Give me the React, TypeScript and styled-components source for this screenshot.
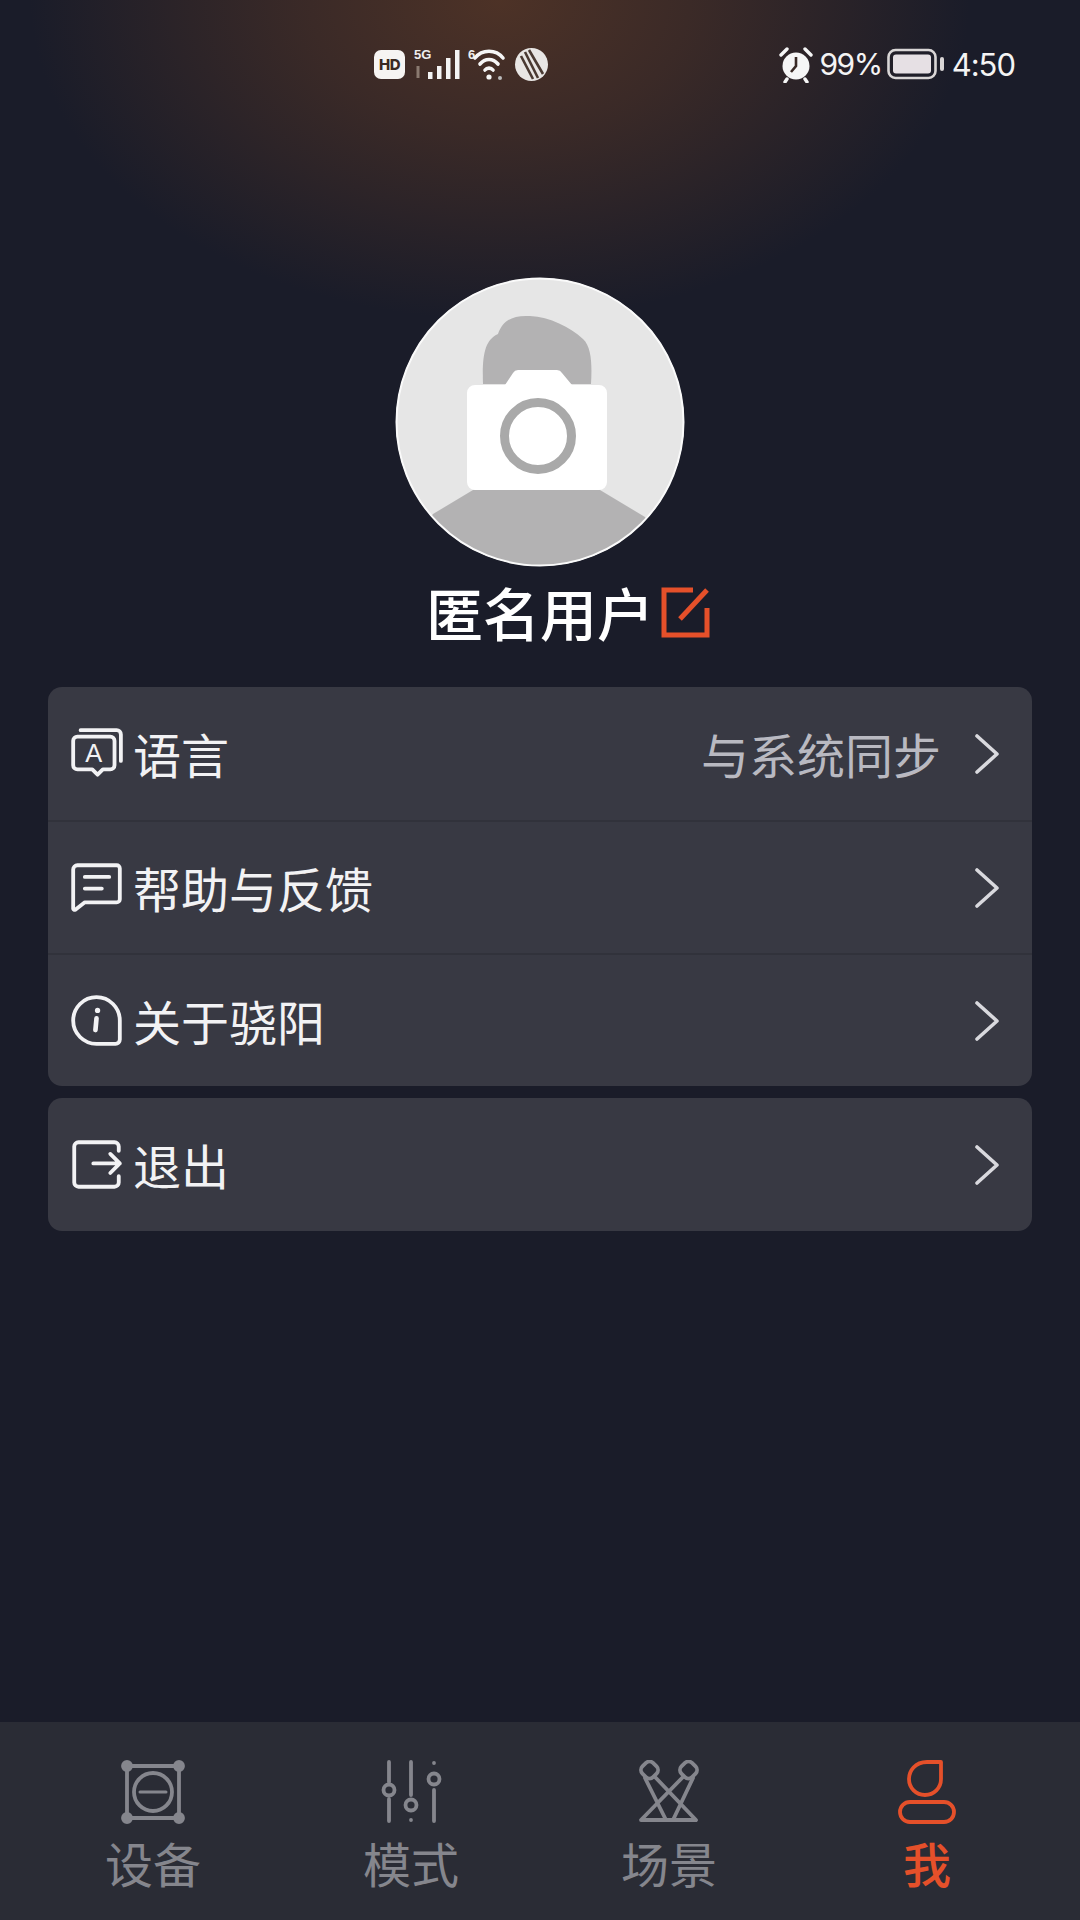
import React from "react";
import styled, { createGlobalStyle } from "styled-components";

const GlobalStyle = createGlobalStyle`
  html, body {
    margin: 0;
    padding: 0;
    background: #1a1c29;
  }
  * {
    box-sizing: border-box;
  }
`;

const Page = styled.div`
  width: 1080px;
  height: 1920px;
  display: flex;
  flex-direction: column;
  overflow: hidden;
  font-family: "Noto Sans CJK SC", "Noto Sans", sans-serif;
  background:
    radial-gradient(ellipse 470px 320px at 500px 0px, rgba(86, 54, 38, 0.85) 0%, rgba(78, 50, 38, 0.62) 42%, rgba(26, 28, 41, 0) 100%),
    #1a1c29;
`;

const StatusBar = styled.div`
  height: 128px;
  flex: none;
  display: flex;
  align-items: center;
  padding: 0 65px 0 374px;
  color: #fff;
  font-family: "Inter", "Liberation Sans", sans-serif;
`;

const StatusLeft = styled.div`
  display: flex;
  align-items: center;
  gap: 7px;
`;

const StatusRight = styled.div`
  margin-left: auto;
  display: flex;
  align-items: center;
  gap: 5px;
`;

const StatusText = styled.span`
  font-size: 30px;
  font-weight: 400;
  letter-spacing: -1.5px;
  color: #f4f4f4;
`;

const Clock = styled(StatusText)`
  margin-left: 2px;
  font-size: 31px;
  letter-spacing: -1px;
`;

const HdBadge = styled.span`
  width: 31px;
  height: 29px;
  border-radius: 7px;
  background: #f6f4f2;
  color: #3a2a22;
  font-size: 15px;
  font-weight: 800;
  display: flex;
  align-items: center;
  justify-content: center;
  letter-spacing: -0.5px;
`;

const Profile = styled.div`
  display: flex;
  flex-direction: column;
  align-items: center;
  padding-top: 149px;
`;

const Avatar = styled.svg`
  width: 290px;
  height: 290px;
  display: block;
`;

const NameRow = styled.div`
  position: relative;
  margin-top: 9px;
  font-size: 57px;
  line-height: 70px;
  font-weight: 500;
  color: #fff;
  white-space: nowrap;
`;

const EditIcon = styled.svg`
  position: absolute;
  left: calc(100% + 6px);
  top: 10px;
  width: 50px;
  height: 52px;
`;

const Menu = styled.div`
  display: flex;
  flex-direction: column;
  gap: 12px;
  padding: 41px 48px 0;
`;

const Card = styled.div`
  background: #383943;
  border-radius: 14px;
  overflow: hidden;
`;

const Row = styled.div`
  height: 133px;
  display: flex;
  align-items: center;
  padding: 0 32px 0 22px;
  & + & {
    border-top: 2px solid #31323b;
  }
`;

const RowIcon = styled.svg`
  width: 53px;
  height: 53px;
  flex: none;
  margin-right: 10px;
  fill: none;
  stroke: #f2f2f4;
  stroke-width: 3.6;
  stroke-linecap: round;
  stroke-linejoin: round;
`;

const RowLabel = styled.span`
  font-size: 48px;
  line-height: 60px;
  padding-bottom: 2px;
  font-weight: 400;
  color: #f2f2f4;
`;

const RowValue = styled.span`
  margin-left: auto;
  font-size: 48px;
  line-height: 60px;
  padding-bottom: 2px;
  font-weight: 400;
  color: #b9b9c1;
`;

const Chevron = styled.svg<{ $withValue?: boolean }>`
  width: 26px;
  height: 40px;
  flex: none;
  margin-left: ${(p) => (p.$withValue ? "33px" : "auto")};
  fill: none;
  stroke: #d9d9de;
  stroke-width: 3.6;
  stroke-linecap: round;
  stroke-linejoin: round;
`;

const TabBar = styled.div`
  margin-top: auto;
  height: 198px;
  flex: none;
  display: grid;
  grid-template-columns: repeat(4, 258px);
  padding: 38px 24px 0;
  background: #2a2c35;
`;

const Tab = styled.div<{ $active?: boolean }>`
  display: flex;
  flex-direction: column;
  align-items: center;
  color: ${(p) => (p.$active ? "#e5502a" : "#85868d")};
`;

const TabIcon = styled.svg`
  width: 64px;
  height: 64px;
  display: block;
  fill: none;
  stroke: currentColor;
  stroke-width: 3.8;
  stroke-linecap: round;
  stroke-linejoin: round;
`;

const TabLabel = styled.span<{ $active?: boolean }>`
  margin-top: 11px;
  font-size: 48px;
  line-height: 54px;
  font-weight: ${(p) => (p.$active ? 500 : 400)};
`;

const ChevronRight = ({ withValue }: { withValue?: boolean }) => (
  <Chevron $withValue={withValue} viewBox="0 0 26 40">
    <path d="M3 2 L23 20 L3 38" />
  </Chevron>
);

const tabs = [
  {
    label: "设备",
    icon: (
      <>
        <rect x="6" y="6" width="52" height="52" />
        <circle cx="6" cy="6" r="4" fill="currentColor" />
        <circle cx="58" cy="6" r="4" fill="currentColor" />
        <circle cx="6" cy="58" r="4" fill="currentColor" />
        <circle cx="58" cy="58" r="4" fill="currentColor" />
        <circle cx="32" cy="32" r="19" />
        <path d="M19 32 H45" strokeWidth="3" />
      </>
    ),
  },
  {
    label: "模式",
    icon: (
      <>
        <path d="M10 2 V22 M10 39 V61 M32 2 V35 M32 60 V60 M55 3 V3 M55 30 V61" />
        <circle cx="10" cy="30" r="5.5" />
        <circle cx="32" cy="45" r="5.5" />
        <circle cx="55" cy="19" r="5.5" />
      </>
    ),
  },
  {
    label: "场景",
    icon: (
      <>
        <rect x="-7.5" y="-7.5" width="15" height="15" rx="5" transform="translate(12.5 10) rotate(45)" />
        <rect x="-7.5" y="-7.5" width="15" height="15" rx="5" transform="translate(51.5 10) rotate(45)" />
        <path d="M18 17 L59 60 H4 L46 17 M8 18 L29 60 M56 18 L36 60" />
      </>
    ),
  },
  {
    label: "我",
    active: true,
    icon: (
      <>
        <path d="M46 2 H32 C20 2 14 11 14 19 C14 28 21 35 30 35 C39 35 46 28 46 19 Z" />
        <rect x="5" y="42" width="54" height="20" rx="10" />
      </>
    ),
  },
];

export default function App() {
  return (
    <Page>
      <GlobalStyle />
      <StatusBar>
        <StatusLeft>
          <HdBadge>HD</HdBadge>
          <svg width="49" height="36" viewBox="0 0 49 36">
            <text x="2" y="13" fontSize="13" fontWeight="700" fill="#eee" fontFamily="Liberation Sans">5G</text>
            <rect x="16" y="26" width="4.5" height="7" fill="#f4f4f4" />
            <rect x="25" y="20" width="4.5" height="13" fill="#f4f4f4" />
            <rect x="34" y="12" width="4.5" height="21" fill="#f4f4f4" />
            <rect x="43" y="4" width="4.5" height="29" fill="#f4f4f4" />
            <path d="M6 20 V32" stroke="#8a7a70" strokeWidth="3" />
          </svg>
          <svg width="39" height="36" viewBox="0 0 39 36" fill="none" stroke="#f6f6f6" strokeWidth="3.6" strokeLinecap="round">
            <text x="0" y="13" fontSize="13" fontWeight="700" fill="#eee" stroke="none" fontFamily="Liberation Sans">6</text>
            <path d="M7 12 C14 3 28 3 35 12" />
            <path d="M12 18 C17 12 25 12 30 18" />
            <path d="M17 24 C19 21.5 23 21.5 25 24" />
            <circle cx="21" cy="31" r="2.6" fill="#f6f6f6" stroke="none" />
            <circle cx="32" cy="32" r="2" fill="#bbb" stroke="none" />
          </svg>
          <svg width="35" height="35" viewBox="0 0 35 35">
            <circle cx="17.5" cy="17.5" r="16.5" fill="#e8e6e4" />
            <path d="M11 5 L24 31 M7 9 L19 32 M15 3 L29 27" stroke="#4a3a32" strokeWidth="2.6" />
          </svg>
        </StatusLeft>
        <StatusRight>
          <svg width="36" height="38" viewBox="0 0 36 38">
            <circle cx="18" cy="21" r="13.5" fill="#f6f6f6" />
            <path d="M18 12 V21 L13 27" stroke="#3a2a26" strokeWidth="2.6" fill="none" />
            <path d="M3 10 L9 4 M33 10 L27 4 M9 34 L7 37 M27 34 L29 37" stroke="#f6f6f6" strokeWidth="3.4" strokeLinecap="round" />
          </svg>
          <StatusText>99%</StatusText>
          <svg width="58" height="32" viewBox="0 0 58 32">
            <rect x="1.5" y="2" width="47" height="28" rx="7" fill="none" stroke="#d9d6d6" strokeWidth="2.6" />
            <rect x="6" y="6.5" width="38" height="19" rx="3" fill="#e6e0e4" />
            <rect x="53" y="9" width="4" height="14" rx="2" fill="#d9d6d6" />
          </svg>
          <Clock>4:50</Clock>
        </StatusRight>
      </StatusBar>

      <Profile>
        <Avatar viewBox="0 0 290 290">
          <defs>
            <clipPath id="avatar-clip">
              <circle cx="145" cy="145" r="144" />
            </clipPath>
          </defs>
          <circle cx="145" cy="145" r="144" fill="#e6e6e6" />
          <g clipPath="url(#avatar-clip)">
            <path d="M88 107 C87 77 90 63 103 57 C108 43 118 38 135 39 C155 40 175 50 188 62 C197 70 197 90 196 107 Z" fill="#b3b2b3" />
            <path d="M38 237 L78 213 H205 L250 240 L290 290 H0 Z" fill="#b3b2b3" />
            <path d="M72 116 a8 8 0 0 1 8 -8 H110 L118 96 a6 6 0 0 1 5 -3 H162 a6 6 0 0 1 5 3 L177 108 H204 a8 8 0 0 1 8 8 V205 a8 8 0 0 1 -8 8 H80 a8 8 0 0 1 -8 -8 Z" fill="#fff" />
            <circle cx="143" cy="159" r="33.5" fill="#fff" stroke="#a9a9a9" strokeWidth="9" />
          </g>
          <circle cx="145" cy="145" r="143.5" fill="none" stroke="#fafafa" strokeWidth="2" />
        </Avatar>
        <NameRow>
          匿名用户
          <EditIcon viewBox="0 0 50 52" fill="none" stroke="#e5502a" strokeWidth="5">
            <path d="M33 4 H4 V49 H47 V22" />
            <path d="M47 4 L20 33" />
          </EditIcon>
        </NameRow>
      </Profile>

      <Menu>
        <Card>
          <Row>
            <RowIcon viewBox="0 0 50 50">
              <path d="M10 3 H44 a4 4 0 0 1 4 4 V32" />
              <path d="M7 9 H38 a4 4 0 0 1 4 4 V36 a4 4 0 0 1 -4 4 H31 L26 45 L21 40 H7 a4 4 0 0 1 -4 -4 V13 a4 4 0 0 1 4 -4 Z" />
              <text x="22.5" y="33" textAnchor="middle" fontSize="24" fontFamily="Liberation Sans" fill="#f2f2f4" stroke="none">A</text>
            </RowIcon>
            <RowLabel>语言</RowLabel>
            <RowValue>与系统同步</RowValue>
            <ChevronRight withValue />
          </Row>
          <Row>
            <RowIcon viewBox="0 0 50 50">
              <path d="M7 4 H44 a3 3 0 0 1 3 3 V36 a3 3 0 0 1 -3 3 H14 L5 46 a1.5 1.5 0 0 1 -2 -1 V8 a4 4 0 0 1 4 -4 Z" />
              <path d="M14 15 H37 M14 26 H30" />
            </RowIcon>
            <RowLabel>帮助与反馈</RowLabel>
            <ChevronRight />
          </Row>
          <Row>
            <RowIcon viewBox="0 0 50 50">
              <path d="M25 3 a22 22 0 0 0 0 44 H43 a4 4 0 0 0 4 -4 V25 A22 22 0 0 0 25 3 Z" />
              <path d="M25 23 L24 34" strokeWidth="4.4" />
              <circle cx="26" cy="15.5" r="2.5" fill="#f2f2f4" stroke="none" />
            </RowIcon>
            <RowLabel>关于骁阳</RowLabel>
            <ChevronRight />
          </Row>
        </Card>
        <Card>
          <Row>
            <RowIcon viewBox="0 0 50 50">
              <path d="M46 12 V8 a4 4 0 0 0 -4 -4 H8 a4 4 0 0 0 -4 4 V42 a4 4 0 0 0 4 4 H42 a4 4 0 0 0 4 -4 V36" />
              <path d="M22 24 H47 M38 15 L47 24 L38 33" />
            </RowIcon>
            <RowLabel>退出</RowLabel>
            <ChevronRight />
          </Row>
        </Card>
      </Menu>

      <TabBar>
        {tabs.map((tab) => (
          <Tab key={tab.label} $active={tab.active}>
            <TabIcon viewBox="0 0 64 64">{tab.icon}</TabIcon>
            <TabLabel $active={tab.active}>{tab.label}</TabLabel>
          </Tab>
        ))}
      </TabBar>
    </Page>
  );
}
